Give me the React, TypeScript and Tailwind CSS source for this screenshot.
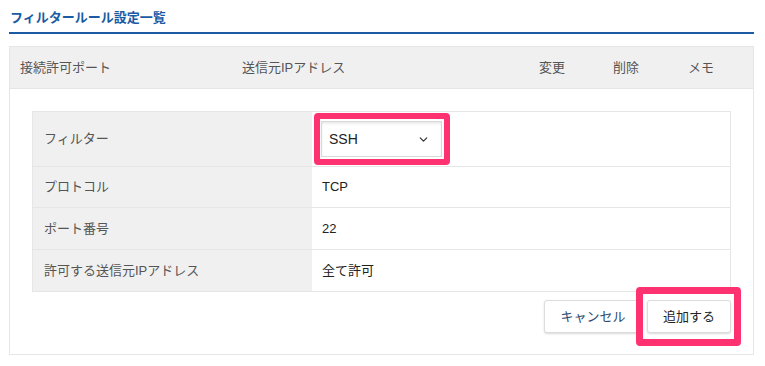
import { ChevronDown } from "lucide-react";

const font = "font-['Helvetica_Neue','Liberation_Sans','Noto_Sans_CJK_JP',sans-serif]";

const rows = [
  { label: "プロトコル", value: "TCP", h: "h-[41px]" },
  { label: "ポート番号", value: "22", h: "h-[42px]" },
  { label: "許可する送信元IPアドレス", value: "全て許可", h: "h-[41px]" },
];

export default function App() {
  return (
    <div className={`min-h-screen bg-white text-[13px] text-[#333] ${font}`}>
      <div className="ml-[9px] w-[745px]">
        {/* TITLE */}
        <h2 className="border-b-2 border-[#1b5ba3] pb-[4px] pl-px pt-[8px] text-[13px] font-bold leading-5 text-[#1b5ba3]">
          フィルタールール設定一覧
        </h2>

        {/* CARD */}
        <div className="mt-[12px] border border-[#e6e6e6]">
          <div className="grid h-[42px] grid-cols-[222px_297px_74px_75px_1fr] items-center border-b border-[#e6e6e6] bg-[#f0f0f0] pl-[10px] text-[#555]">
            <span>接続許可ポート</span>
            <span>送信元IPアドレス</span>
            <span>変更</span>
            <span>削除</span>
            <span>メモ</span>
          </div>

          <div className="px-[22px] pb-[21px] pt-[22px]">
            <div className="border border-[#e6e6e6]">
              <div className="flex h-[55px] border-b border-[#e6e6e6]">
                <div className="flex w-[279px] items-center bg-[#f0f0f0] pl-[11px] text-[#555]">
                  フィルター
                </div>
                <div className="flex items-center pl-[9px]">
                  <div className="relative">
                    <div className="flex h-[36px] w-[121px] items-center justify-between border border-[#d8d8d8] bg-white pl-[7px] pr-[11px] text-[14px] text-[#222] shadow-[inset_0_2px_2px_rgba(0,0,0,0.08)]">
                      <span>SSH</span>
                      <ChevronDown size={13} strokeWidth={2.2} className="text-[#333]" />
                    </div>
                    <div className="pointer-events-none absolute -bottom-[8px] -left-[7px] -right-[8px] -top-[8px] rounded-[4px] border-[6px] border-[#ff3271]" />
                  </div>
                </div>
              </div>

              {rows.map((r, i) => (
                <div
                  key={r.label}
                  className={`flex ${r.h} ${i < rows.length - 1 ? "border-b border-[#e6e6e6]" : ""}`}
                >
                  <div className="flex w-[279px] items-center bg-[#f0f0f0] pl-[11px] text-[#555]">
                    {r.label}
                  </div>
                  <div className="flex items-center pl-[10px] text-[#222]">{r.value}</div>
                </div>
              ))}
            </div>

            {/* BUTTONS */}
            <div className="mt-[8px] flex justify-end gap-[5px]">
              <button className="h-[33px] w-[98px] rounded-[3px] border border-[#dcdcdc] bg-white text-[13px] text-[#2c4a6e] shadow-[0_1px_2px_rgba(0,0,0,0.15)]">
                キャンセル
              </button>
              <div className="relative">
                <button className="h-[33px] w-[84px] rounded-[3px] border border-[#dcdcdc] bg-white text-[13px] text-[#222] shadow-[0_1px_2px_rgba(0,0,0,0.15)]">
                  追加する
                </button>
                <div className="pointer-events-none absolute -bottom-[13px] -left-[11px] -right-[10px] -top-[13px] rounded-[4px] border-[7px] border-[#ff3271]" />
              </div>
            </div>
          </div>
        </div>
      </div>
    </div>
  );
}
